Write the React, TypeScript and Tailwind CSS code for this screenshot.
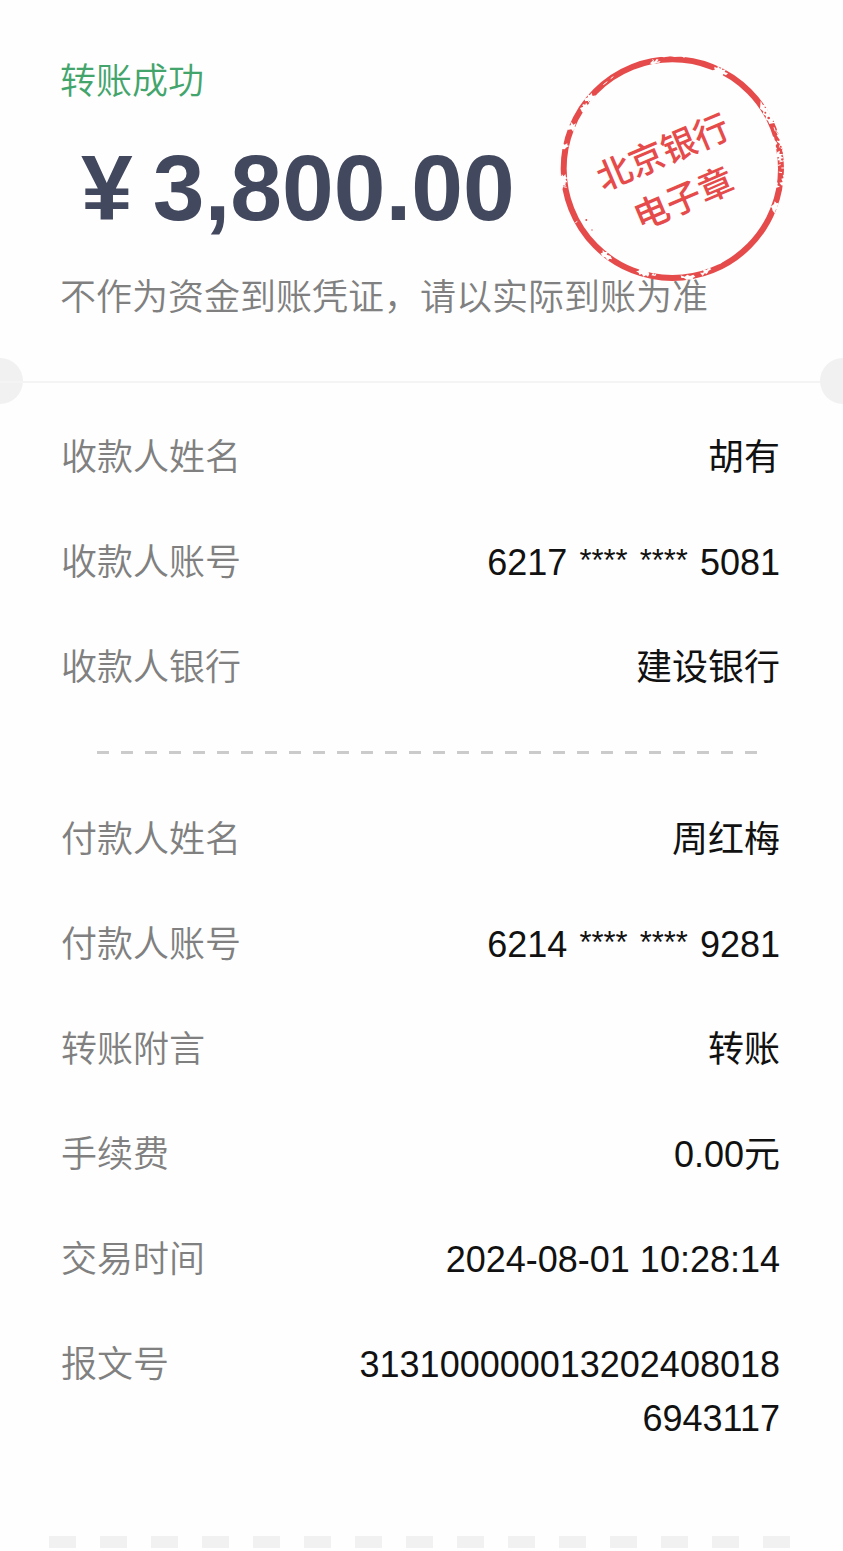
import { clsx } from 'clsx';

interface DetailItem {
  label: string;
  value: string;
  masked?: boolean;
}

const payeeItems: DetailItem[] = [
  { label: '收款人姓名', value: '胡有' },
  { label: '收款人账号', value: '6217 **** **** 5081', masked: true },
  { label: '收款人银行', value: '建设银行' },
];

const payerItems: DetailItem[] = [
  { label: '付款人姓名', value: '周红梅' },
  { label: '付款人账号', value: '6214 **** **** 9281', masked: true },
  { label: '转账附言', value: '转账' },
  { label: '手续费', value: '0.00元' },
  { label: '交易时间', value: '2024-08-01 10:28:14' },
  { label: '报文号', value: '3131000000132024080186943117' },
];

/* ── stamp ───────────────────────────────────────────────── */

// Gaps in the ink, cut out of the ring
const ringWear = [
  'M330 70l8-8 4 5 8-10 6 2-6 6 12-2-4 5-12 1-6 6z',
  'M352 49l20 3 18-4 14 3 20-2 8 4 12-6v-8h-92z',
  'M516 92l10-4-4-8 10 4 2-8 6 10 8-4-2 8 12-2-4 8 10 4-6 6-8-4-4 8-8-8-8 2-2-6z',
  'M662 182l6 12 8 2-4 8 12 0-2 8 12 4-6 6 14 4-4 10 8 12-18 4-4-10-8-4 2-10-10-6 2-8-10-8z',
  'M716 262l-8 12 10 6-8 6 8 12-8 6 10 8-4 10 14 2-4 10 14 4 4-60z',
  'M694 290l8 0 2 10 8 10-6 8 6 10-8-2-8-14z',
  'M712 336l8-4-2 10 12 0-8 6 10 6-10 2 4 8-14-4 6-8-10-2z',
  'M736 402l-8 4 4 8-8 2 4 10-10 2 6 8 18 2z',
  'M704 424l10 4-2 8 8 4-14 4z',
  'M692 500l10-8 2-8 6 6 6-2-4 12 4 6-8 2-4 12-6-8-2-8z',
  'M132 176l12-4-2-10 8 4 4-8 4 10 10-2-6 8 6 4-12 2-2 8-8-6-10 2z',
  'M120 204l10-4-2-8 8 2 2-6 6 8-4 8 6 4-10 2-4 10-6-4z',
  'M84 256l8 0 2-10 6 8 8-4-4 10 6 4-8 4-2 8-6-8-12 2z',
  'M60 318l8-8 6 4 8-4 0 6 6 2-8 4-6 6-14-2z',
  'M58 412l8-6 4 4 6-8 2 10 6 2-8 4 6 8-8 2 4 10-8-2-2 10-4-2-2-12-6-4 6-6z',
  'M182 640l6-2 0-8 6 6 10 0-4 8 12 4 4 10-8-2-4 6-8-10-8-2z',
  'M288 694l8-2 4-8 6 6 8-6 0 8 10 0 4 10-4 8-6-4-8 4-4-8-8 2-2-6z',
  'M334 706l6-8 2 6 8-4-4 8z',
  'M422 706l12 4 8-6 8 4 10-4 6 6-8 4 4 6-14-2-8 2-8-6-8 0z',
  'M480 698l10 0 2-10 8 2 8-8 6 6-8 4-4 8-8 0-6 8z',
];

// Thin scratches that leave some ink between them
const ringScratches = [
  'M668 204l8-4M674 214l10-2M684 222l-2 10M690 230l6-6M702 262l4 12M710 276l4 8',
  'M718 366l14-4M714 376l8-2M724 384l8 0M716 396l10 2M728 344l6 8M720 322l6 4',
  'M524 84l6 10M544 92l4 12M338 58l8 14M140 178l10 12M128 196l10 14M92 248l10 14',
  'M66 404l10 14M66 424l12 6M70 440l10 2M200 644l8 12M302 690l8 14M428 712l16 2',
  'M490 690l10 12M106 548l6-4M190 134l12-9M212 116l8-6M536 672l10-5',
];

function BankStamp() {
  return (
    <svg
      viewBox="60 48 672 678"
      className="absolute top-14 right-[59px] h-[226px] w-56"
      role="img"
      aria-label="北京银行电子章"
    >
      <ellipse cx="397" cy="386" rx="326" ry="328" fill="none" stroke="#e64b4b" strokeWidth="18" />
      {ringWear.map((d) => (
        <path key={d} d={d} fill="#fefefe" />
      ))}
      {ringScratches.map((d) => (
        <path key={d} d={d} fill="none" stroke="#fefefe" strokeWidth="3" />
      ))}
      <g fill="#e64b4b">
        <circle cx="139" cy="540" r="3" />
        <circle cx="156" cy="570" r="2" />
        <circle cx="686" cy="234" r="4" />
        <circle cx="676" cy="218" r="3" />
        <circle cx="700" cy="244" r="2" />
        <circle cx="716" cy="300" r="3" />
        <circle cx="722" cy="320" r="3" />
      </g>
      <g
        transform="rotate(-23 397 404)"
        fill="#e64b4b"
        fontSize="105"
        textAnchor="middle"
        className="font-medium"
      >
        <text x="397" y="369">北京银行</text>
        <text x="400" y="521">电子章</text>
      </g>
    </svg>
  );
}

/* ── details ─────────────────────────────────────────────── */

function AccountNumber({ value }: { value: string }) {
  return (
    <span className="flex items-start gap-3">
      {value.split(' ').map((group, i) => (
        <span key={i} className={clsx(group.startsWith('*') && 'text-[31px] leading-[50px]')}>
          {group}
        </span>
      ))}
    </span>
  );
}

function DetailList({ items, className }: { items: DetailItem[]; className?: string }) {
  return (
    <dl className={clsx('flex flex-col gap-[51px] pr-[63px] pl-[61px]', className)}>
      {items.map((item) => (
        <div key={item.label} className="flex items-start justify-between">
          <dt className="shrink-0 font-[350] text-[#808080]">{item.label}</dt>
          <dd className="max-w-[430px] text-right break-all text-[#111]">
            {item.masked ? <AccountNumber value={item.value} /> : item.value}
          </dd>
        </div>
      ))}
    </dl>
  );
}

function TicketDivider() {
  return (
    <div className="relative flex h-[46px] items-center justify-between overflow-hidden">
      <span className="-ml-[23px] size-[46px] rounded-full bg-[#f1f1f1]" />
      <span className="absolute inset-x-0 top-[23px] h-0.5 bg-[#f4f4f4]" />
      <span className="relative -mr-[23px] size-[46px] rounded-full bg-[#f1f1f1]" />
    </div>
  );
}

/* ── page ────────────────────────────────────────────────── */

export default function App() {
  return (
    <main className="relative min-h-screen bg-[#fefefe] font-['Liberation_Sans','Noto_Sans_CJK_SC',sans-serif] text-[36px] leading-[54px]">
      <header className="px-[60px] pt-[55px] pb-[33px]">
        <p className="font-[350] text-[#43a56c]">转账成功</p>
        <h1 className="mt-[23px] flex gap-5 pl-[21px] text-[93px] leading-[112px] font-bold text-[#42485e]">
          <span>¥</span>
          <span>3,800.00</span>
        </h1>
        <p className="mt-[27px] font-[350] text-[#808080]">不作为资金到账凭证，请以实际到账为准</p>
      </header>
      <BankStamp />

      <TicketDivider />

      <DetailList items={payeeItems} className="mt-[27px]" />
      <div className="mx-[85px] mt-14 h-[3px] bg-[repeating-linear-gradient(to_right,transparent_0_12px,#cbcbcb_12px_24px)]" />
      <DetailList items={payerItems} className="mt-[59px]" />

      <div className="mt-[90px] mr-[53px] ml-[49px] h-3 bg-[repeating-linear-gradient(to_right,#f1f1f1_0_27px,transparent_27px_51px)]" />
    </main>
  );
}
